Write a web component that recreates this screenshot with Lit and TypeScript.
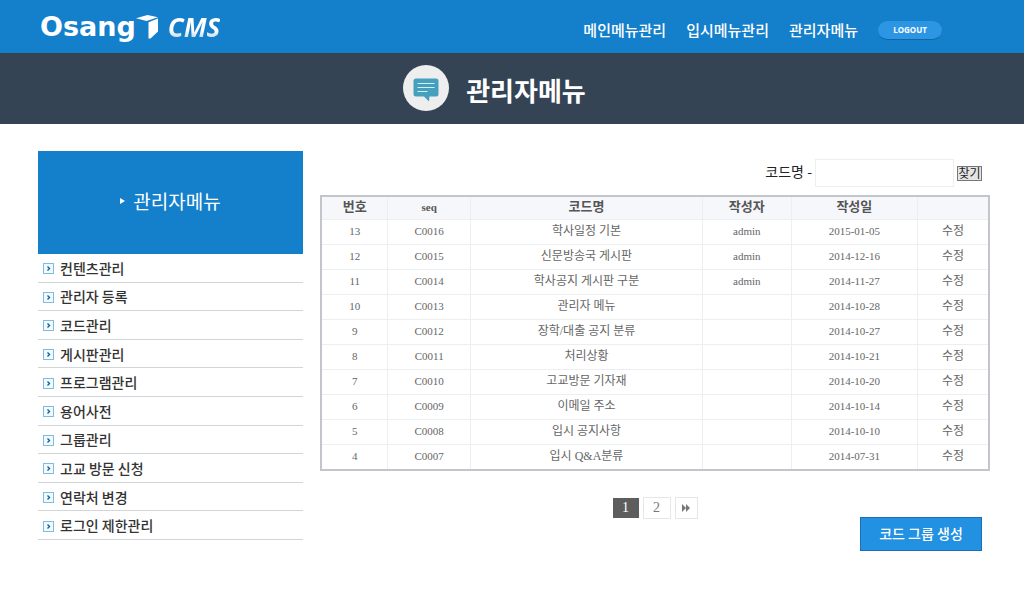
import { LitElement, html, css } from "lit";
import { customElement, property } from "lit/decorators.js";

interface CodeRow {
  no: number;
  seq: string;
  name: string;
  author: string;
  date: string;
}

const NAV = ["메인메뉴관리", "입시메뉴관리", "관리자메뉴"];

const SIDE_MENU = [
  "컨텐츠관리",
  "관리자 등록",
  "코드관리",
  "게시판관리",
  "프로그램관리",
  "용어사전",
  "그룹관리",
  "고교 방문 신청",
  "연락처 변경",
  "로그인 제한관리",
];

const ROWS: CodeRow[] = [
  { no: 13, seq: "C0016", name: "학사일정 기본", author: "admin", date: "2015-01-05" },
  { no: 12, seq: "C0015", name: "신문방송국 게시판", author: "admin", date: "2014-12-16" },
  { no: 11, seq: "C0014", name: "학사공지 게시판 구분", author: "admin", date: "2014-11-27" },
  { no: 10, seq: "C0013", name: "관리자 메뉴", author: "", date: "2014-10-28" },
  { no: 9, seq: "C0012", name: "장학/대출 공지 분류", author: "", date: "2014-10-27" },
  { no: 8, seq: "C0011", name: "처리상황", author: "", date: "2014-10-21" },
  { no: 7, seq: "C0010", name: "고교방문 기자재", author: "", date: "2014-10-20" },
  { no: 6, seq: "C0009", name: "이메일 주소", author: "", date: "2014-10-14" },
  { no: 5, seq: "C0008", name: "입시 공지사항", author: "", date: "2014-10-10" },
  { no: 4, seq: "C0007", name: "입시 Q&A분류", author: "", date: "2014-07-31" },
];

@customElement("cms-header")
export class CmsHeader extends LitElement {
  static styles = css`
    :host {
      display: flex;
      align-items: center;
      justify-content: space-between;
      height: 53px;
      padding: 0 82px 0 40px;
      background: #147fcb;
      color: #fff;
    }
    .logo {
      display: flex;
      align-items: center;
      color: #fff;
      text-decoration: none;
    }
    .word {
      font: bold 27px/28px "DejaVu Sans", sans-serif;
    }
    .cube {
      display: block;
      width: 23px;
      height: 26px;
    }
    .cms {
      margin-left: 9px;
      font: italic bold 26px/32px "Open Sans", sans-serif;
      background: linear-gradient(#fff 60%, #cfe0f0 80%);
      background-clip: text;
      -webkit-background-clip: text;
      color: transparent;
    }
    .nav {
      display: flex;
      align-items: center;
      gap: 20px;
      padding-top: 8px;
    }
    .nav a {
      padding-bottom: 2px;
      color: #fff;
      text-decoration: none;
      font: 500 15px/20px "Noto Sans CJK KR", sans-serif;
    }
    .logout {
      width: 64px;
      height: 19px;
      padding: 0;
      border: 0;
      border-bottom: 1px solid #1266a5;
      border-radius: 10px;
      background: #2c96e4;
      color: #fff;
      font: bold 8px/18px "Open Sans", sans-serif;
    }
  `;

  render() {
    return html`
      <a class="logo" href="#">
        <span class="word">Osang</span>
        <svg class="cube" viewBox="0 0 23 26" aria-hidden="true">
          <path d="M0 4.2 11.500 1 22 3.200 10.500 7Z" fill="#fff" />
          <path d="M12.500 8.200 22 4.500V17.500L14.500 24.500H12.500Z" fill="#fff" />
        </svg>
        <span class="cms">CMS</span>
      </a>
      <nav class="nav">
        ${NAV.map((label) => html`<a href="#">${label}</a>`)}
        <button class="logout" type="button">LOGOUT</button>
      </nav>
    `;
  }
}

@customElement("page-banner")
export class PageBanner extends LitElement {
  @property() heading = "";

  static styles = css`
    :host {
      display: flex;
      align-items: center;
      justify-content: center;
      gap: 16px;
      height: 71px;
      padding-right: 36px;
      background: #354455;
      color: #fff;
    }
    .icon {
      display: block;
      width: 48px;
      height: 48px;
    }
    .heading {
      margin: 0;
      padding-top: 2px;
      font: bold 26px/36px "Noto Sans CJK KR", sans-serif;
    }
  `;

  render() {
    return html`
      <svg class="icon" viewBox="0 0 48 48" aria-hidden="true">
        <circle cx="24" cy="23" r="23" fill="#eee" />
        <path
          d="M14 13.500h20a2.500 2.500 0 0 1 2.500 2.500v13a2.500 2.500 0 0 1-2.500 2.500h-6.500l-.5 5-5-5H14a2.500 2.500 0 0 1-2.500-2.500V16a2.500 2.500 0 0 1 2.500-2.500Z"
          fill="#45a0bd"
        />
        <path d="M15.500 18.500h17M15.500 22.500h17M15.500 26.500h10" stroke="#d9eef4" stroke-width="1" />
      </svg>
      <h1 class="heading">${this.heading}</h1>
    `;
  }
}

@customElement("side-menu")
export class SideMenu extends LitElement {
  static styles = css`
    :host {
      display: block;
      font-family: "Noto Sans CJK KR", sans-serif;
    }
    .title {
      box-sizing: border-box;
      display: flex;
      align-items: center;
      justify-content: center;
      gap: 8px;
      height: 103px;
      margin: 0;
      padding-bottom: 4px;
      background: #147fcb;
      color: #fff;
      font-size: 19px;
      font-weight: 400;
    }
    .marker {
      width: 5px;
      height: 8px;
    }
    .list {
      display: grid;
      grid-auto-rows: 1fr;
      min-height: 286px;
      margin: 0;
      padding: 0;
      list-style: none;
    }
    .item {
      display: flex;
      border-bottom: 1px solid #d0d7db;
    }
    .link {
      display: flex;
      flex: 1;
      align-items: center;
      gap: 6px;
      padding-left: 5px;
      color: #333;
      text-decoration: none;
      font-size: 14px;
      font-weight: 500;
      line-height: 20px;
    }
    .bullet {
      width: 11px;
      height: 11px;
      padding-top: 2px;
    }
  `;

  render() {
    return html`
      <h2 class="title">
        <svg class="marker" viewBox="0 0 5 8" aria-hidden="true"><path d="M0 1 5 4 0 7Z" fill="#fff" /></svg>
        관리자메뉴
      </h2>
      <ul class="list">
        ${SIDE_MENU.map(
          (label) => html`
            <li class="item">
              <a class="link" href="#">
                <svg class="bullet" viewBox="0 0 11 11" aria-hidden="true">
                  <rect x=".5" y=".5" width="10" height="10" fill="#eefaff" stroke="#82bcdc" />
                  <path d="M4.500 3.500 6.500 5.500 4.500 7.500" fill="none" stroke="#1d5f8f" stroke-width="1.400" />
                </svg>
                ${label}
              </a>
            </li>
          `
        )}
      </ul>
    `;
  }
}

@customElement("code-list")
export class CodeList extends LitElement {
  static styles = css`
    :host {
      display: block;
    }
    .search {
      display: flex;
      align-items: center;
      justify-content: flex-end;
      gap: 3px;
      margin: 0;
      padding: 8px 8px 8px 0;
      font: 14px/20px "Noto Sans CJK KR", sans-serif;
      color: #222;
    }
    .search label {
      padding-bottom: 4px;
    }
    .keyword {
      box-sizing: border-box;
      width: 139px;
      height: 28px;
      border: 1px solid #eee;
      background: #fff;
      outline: none;
    }
    .find {
      width: 25px;
      height: 15px;
      padding: 0;
      border: 1px solid #777;
      background: #e4e4e4;
      color: #222;
      font: 12px/12px "Noto Sans CJK KR", sans-serif;
    }
    .table {
      width: 100%;
      table-layout: fixed;
      border-collapse: collapse;
      border: 2px solid #c3c5cc;
      color: #666;
      font: 12px/16px "Liberation Serif", "Noto Sans CJK KR", serif;
    }
    .no { width: 9.8%; }
    .seq { width: 12.2%; }
    .name { width: 34.6%; }
    .author { width: 13.1%; }
    .date { width: 18.8%; }
    th,
    td {
      height: 22px;
      padding: 0 0 2px;
      border: 1px solid #eceef0;
      text-align: center;
    }
    th {
      height: 20px;
      background: #f6f7fb;
      color: #555;
      font-size: 13px;
    }
    .small {
      font-size: 11px;
    }
    .edit {
      color: #666;
      text-decoration: none;
    }
    .pager {
      display: flex;
      align-items: center;
      justify-content: center;
      gap: 4px;
      margin-top: 26px;
    }
    .page {
      box-sizing: border-box;
      display: flex;
      align-items: center;
      justify-content: center;
      width: 28px;
      height: 22px;
      border: 1px solid #e6e6e6;
      color: #777;
      text-decoration: none;
      font: 14px/20px "Liberation Serif", serif;
    }
    .current {
      width: 26px;
      height: 20px;
      border: 0;
      background: #5d5d5d;
      color: #fff;
    }
    .next {
      width: 23px;
    }
    .arrow {
      width: 8px;
      height: 8px;
    }
    .actions {
      display: flex;
      justify-content: flex-end;
      margin-top: -2px;
      padding-right: 8px;
    }
    .create {
      width: 122px;
      height: 34px;
      padding: 0 0 2px;
      border: 1px solid #1a70b2;
      background: #2291e2;
      color: #fff;
      font: 500 14px/20px "Noto Sans CJK KR", sans-serif;
    }
  `;

  render() {
    return html`
      <form class="search">
        <label for="keyword">코드명 -</label>
        <input class="keyword" id="keyword" type="text" />
        <button class="find" type="button">찾기</button>
      </form>
      <table class="table">
        <thead>
          <tr>
            <th class="no" scope="col">번호</th>
            <th class="seq" scope="col"><span class="small">seq</span></th>
            <th class="name" scope="col">코드명</th>
            <th class="author" scope="col">작성자</th>
            <th class="date" scope="col">작성일</th>
            <th></th>
          </tr>
        </thead>
        <tbody>
          ${ROWS.map(
            (row) => html`
              <tr>
                <td class="small">${row.no}</td>
                <td class="small">${row.seq}</td>
                <td>${row.name}</td>
                <td class="small">${row.author}</td>
                <td class="small">${row.date}</td>
                <td><a class="edit" href="#">수정</a></td>
              </tr>
            `
          )}
        </tbody>
      </table>
      <nav class="pager" aria-label="페이지">
        <a class="page current" href="#" aria-current="page">1</a>
        <a class="page" href="#">2</a>
        <a class="page next" href="#" aria-label="다음">
          <svg class="arrow" viewBox="0 0 8 8" aria-hidden="true">
            <path d="M0 0 4 4 0 8ZM4 0 8 4 4 8Z" fill="#777" />
          </svg>
        </a>
      </nav>
      <div class="actions">
        <button class="create" type="button">코드 그룹 생성</button>
      </div>
    `;
  }
}

@customElement("app-root")
export class AppRoot extends LitElement {
  static styles = css`
    :host {
      display: block;
      min-height: 100vh;
      background: #fff;
    }
    .body {
      display: flex;
      align-items: flex-start;
      gap: 17px;
      padding: 27px 34px 0 38px;
    }
    .side {
      flex: 0 0 265px;
    }
    .main {
      flex: 1;
      min-width: 0;
    }
  `;

  render() {
    return html`
      <cms-header></cms-header>
      <page-banner heading="관리자메뉴"></page-banner>
      <div class="body">
        <side-menu class="side"></side-menu>
        <code-list class="main"></code-list>
      </div>
    `;
  }
}
